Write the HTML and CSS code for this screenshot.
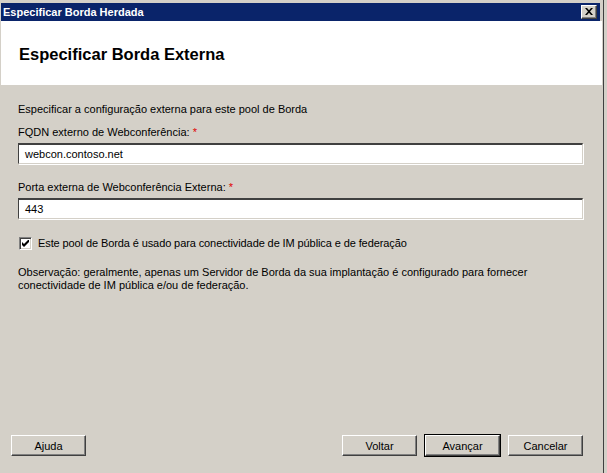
FILE: index.html
```html
<!DOCTYPE html>
<html lang="pt-BR">
<head>
<meta charset="utf-8">
<title>Especificar Borda Herdada</title>
<link rel="stylesheet" href="styles.css">
</head>
<body>
<div class="window">
  <div class="titlebar">
    <span class="title">Especificar Borda Herdada</span>
    <span class="close"><svg width="8" height="7" viewBox="0 0 8 7"><path d="M0 0h2l2 2.2L6 0h2L5 3.5 8 7H6L4 4.8 2 7H0l3-3.5z" fill="#000"/></svg></span>
  </div>
  <div class="header">
    <h1 class="heading">Especificar Borda Externa</h1>
  </div>
  <div class="content">
    <p class="intro">Especificar a configuração externa para este pool de Borda</p>
    <div class="field">
      <div class="label">FQDN externo de Webconferência: <span class="req">*</span></div>
      <div class="input">webcon.contoso.net</div>
    </div>
    <div class="field">
      <div class="label">Porta externa de Webconferência Externa: <span class="req">*</span></div>
      <div class="input">443</div>
    </div>
    <div class="check">
      <span class="box"><svg width="7" height="7" viewBox="0 0 7 7"><path d="M0 2v3l2 2 5-5V-1L2 4z" fill="#000"/></svg></span>
      <span>Este pool de Borda é usado para conectividade de IM pública e de federação</span>
    </div>
    <p class="note">Observação: geralmente, apenas um Servidor de Borda da sua implantação é configurado para fornecer conectividade de IM pública e/ou de federação.</p>
  </div>
  <div class="footer">
    <span class="btn">Ajuda</span>
    <span class="spacer"></span>
    <span class="btn">Voltar</span>
    <span class="btn default">Avançar</span>
    <span class="btn">Cancelar</span>
  </div>
</div>
</body>
</html>
```

FILE: styles.css
```css
* { box-sizing: border-box; }
html, body {
  margin: 0;
  padding: 0;
  background: #d4d0c8;
  width: 607px;
  height: 473px;
  overflow: hidden;
}
body {
  font-family: "Liberation Sans", Arial, sans-serif;
  font-size: 11px;
  color: #000;
}
.window {
  width: 604px;
  height: 473px;
  border-right: 1px solid #404040;
  display: flex;
  flex-direction: column;
  padding: 3px 3px 0 1px;
}
.titlebar {
  height: 18px;
  background: #0a246a;
  color: #fff;
  font-weight: bold;
  display: flex;
  align-items: center;
  justify-content: space-between;
  padding: 0 3px 0 2px;
}
.title { line-height: 18px; }
.close {
  width: 16px;
  height: 14px;
  background: #d4d0c8;
  border-top: 1px solid #fff;
  border-left: 1px solid #fff;
  border-right: 1px solid #404040;
  border-bottom: 1px solid #404040;
  box-shadow: inset -1px -1px 0 #808080;
  display: flex;
  align-items: center;
  justify-content: center;
}
.close svg { display: block; margin: 0 1px 1px 0; }
.header {
  height: 64px;
  background: #fff;
  margin-right: -2px;
  padding: 24px 0 0 18px;
}
.heading {
  margin: 0;
  font-size: 16.5px;
  line-height: 19px;
  font-weight: bold;
  color: #000;
}
.content {
  flex: 1;
  padding: 18px 17px 0 17px;
}
.intro { margin: 0 0 10px; line-height: 13px; }
.field { margin-bottom: 17px; }
.label { line-height: 13px; margin-bottom: 4px; }
.req { color: #e00000; }
.input {
  height: 21px;
  background: #fff;
  border-top: 2px solid #404040;
  border-left: 1px solid #404040;
  border-right: 1px solid #d4d0c8;
  border-bottom: 1px solid #d4d0c8;
  box-shadow: 1px 1px 0 #fff;
  padding: 2px 0 0 6px;
  line-height: 14px;
}
.check {
  display: flex;
  align-items: center;
  gap: 6px;
  margin: 18px 0 0 1px;
  line-height: 13px;
  letter-spacing: -0.1px;
}
.box {
  width: 13px;
  height: 13px;
  background: #fff;
  border-top: 1px solid #808080;
  border-left: 1px solid #808080;
  border-right: 1px solid #fff;
  border-bottom: 1px solid #fff;
  box-shadow: inset 1px 1px 0 #404040, inset -1px -1px 0 #d4d0c8;
  display: flex;
  align-items: center;
  justify-content: center;
}
.note { margin: 16px 0 0; line-height: 13px; width: 520px; }
.footer {
  height: 38px;
  display: flex;
  gap: 8px;
  padding: 0 17px 0 10px;
  align-items: flex-start;
}
.spacer { flex: 1; }
.btn {
  width: 75px;
  height: 21px;
  display: flex;
  align-items: center;
  justify-content: center;
  background: #d4d0c8;
  border-top: 1px solid #fff;
  border-left: 1px solid #fff;
  border-right: 1px solid #404040;
  border-bottom: 1px solid #404040;
  box-shadow: inset -1px -1px 0 #808080;
}
.btn.default {
  outline: 1px solid #000;
  outline-offset: 0;
}
```
